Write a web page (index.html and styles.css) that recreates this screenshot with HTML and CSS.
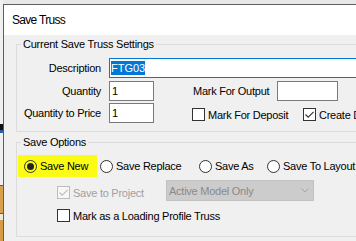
FILE: index.html
```html
<!DOCTYPE html>
<html>
<head>
<meta charset="utf-8">
<link rel="stylesheet" href="styles.css">
</head>
<body>
<div class="strip">
  <div class="seg s-top"></div>
  <div class="seg s-arrow"></div>
  <div class="seg s-arrow2"></div>
  <div class="seg s-light"></div>
  <div class="seg s-line"></div>
  <div class="seg s-orange"></div>
  <div class="seg s-line"></div>
  <div class="seg s-light2"></div>
  <div class="seg s-orange2"></div>
</div>
<div class="window">
  <div class="titlebar">Save Truss</div>
  <div class="content">
    <div class="group g1">
      <div class="legend">Current Save Truss Settings</div>
      <div class="row r-desc">
        <span class="lbl">Description</span>
        <div class="input focused"><span class="sel">FTG03</span></div>
      </div>
      <div class="row r-qty">
        <span class="lbl">Quantity</span>
        <div class="input small">1</div>
        <span class="lbl2">Mark For Output</span>
        <div class="input output"></div>
      </div>
      <div class="row r-qtp">
        <span class="lbl">Quantity to Price</span>
        <div class="input small">1</div>
        <label class="check c-deposit"><span class="cb"></span><span>Mark For Deposit</span></label>
        <label class="check"><span class="cb on"><svg viewBox="0 0 11 11" width="11" height="11"><path d="M1.5 5.5 L4.2 8.2 L9.6 2.8" fill="none" stroke="#333" stroke-width="1.1"/></svg></span><span>Create Deposit</span></label>
      </div>
    </div>
    <div class="group g2">
      <div class="legend">Save Options</div>
      <div class="row r-radios">
        <label class="radio hl w1"><span class="rb on"><span class="dot"></span></span><span>Save New</span></label>
        <label class="radio w2"><span class="rb"></span><span>Save Replace</span></label>
        <label class="radio w3"><span class="rb"></span><span>Save As</span></label>
        <label class="radio"><span class="rb"></span><span>Save To Layout</span></label>
      </div>
      <div class="row r-proj">
        <label class="check disabled w-proj"><span class="cb"><svg viewBox="0 0 11 11" width="11" height="11"><path d="M1.5 5.5 L4.2 8.2 L9.6 2.8" fill="none" stroke="#bcbcbc" stroke-width="1.1"/></svg></span><span>Save to Project</span></label>
        <div class="select"><span>Active Model Only</span><svg class="chev" viewBox="0 0 8 5" width="8" height="5"><path d="M0.5 0.5 L4 4 L7.5 0.5" fill="none" stroke="#a6a6a6" stroke-width="1"/></svg></div>
      </div>
      <div class="row r-load">
        <label class="check"><span class="cb"></span><span>Mark as a Loading Profile Truss</span></label>
      </div>
    </div>
  </div>
</div>
</body>
</html>
```
FILE: styles.css
```css
html, body {
  margin: 0;
  padding: 0;
}
body {
  width: 356px;
  height: 241px;
  overflow: hidden;
  display: flex;
  background: #e8e8e8;
  font-family: "Liberation Sans", Arial, sans-serif;
  font-size: 11px;
  letter-spacing: -0.25px;
  color: #000;
}
.strip {
  width: 3px;
  flex: none;
  display: flex;
  flex-direction: column;
}
.seg { flex: none; }
.s-top { height: 124px; background: #f0f0f0; }
.s-arrow { height: 6px; background: #111; }
.s-arrow2 { height: 3px; background: #2a5fa8; }
.s-light { height: 52px; background: #f0f0f0; }
.s-line { height: 1px; background: #6a5a40; }
.s-orange { height: 27px; background: #d8a04c; }
.s-light2 { height: 6px; background: #ece7df; }
.s-orange2 { height: 21px; background: #d69b45; }

.window {
  flex: 1;
  margin-top: 4px;
  border-left: 1px solid #5e5e5e;
  border-top: 1px solid #5e5e5e;
  background: #f0f0f0;
  overflow: hidden;
}
.titlebar {
  height: 30px;
  line-height: 30px;
  background: #fff;
  padding-left: 8px;
  font-size: 12px;
  letter-spacing: -0.7px;
}
.content {
  width: 420px;
  padding-left: 12px;
}
.group {
  border: 1px solid #dcdcdc;
}
.g1 {
  margin-top: 9px;
  padding-bottom: 8px;
}
.g2 {
  margin-top: 10px;
  padding-bottom: 14px;
}
.legend {
  width: fit-content;
  margin-top: -7px;
  margin-left: 4px;
  padding: 0 2px;
  height: 13px;
  line-height: 13px;
  background: #f0f0f0;
  white-space: nowrap;
}
.row {
  display: flex;
  align-items: center;
}
.lbl {
  width: 84px;
  flex: none;
  display: flex;
  justify-content: flex-end;
  margin-right: 8px;
  white-space: nowrap;
}
.input {
  height: 20px;
  box-sizing: border-box;
  border: 1px solid #7a7a7a;
  background: #fff;
  line-height: 18px;
  padding-left: 2px;
  flex: none;
  letter-spacing: 0;
}
.input.focused {
  flex: 1;
  border-color: #0078d7;
  padding-left: 1px;
}
.sel {
  background: #0078d7;
  color: #fff;
  display: inline-block;
  line-height: 14px;
  vertical-align: middle;
  margin-top: -2px;
}
.input.small { width: 45px; }
.input.output { width: 61px; }
.r-desc { margin-top: 7px; }
.r-qty { margin-top: 3px; }
.r-qtp { margin-top: 2px; }
.lbl2 {
  margin-left: 39px;
  width: 84px;
  flex: none;
  white-space: nowrap;
}
.check {
  display: flex;
  align-items: center;
  gap: 3px;
  white-space: nowrap;
}
.c-deposit {
  margin-left: 38px;
  width: 111px;
  flex: none;
}
.r-qtp .check { margin-top: 3px; }
.cb {
  width: 13px;
  height: 13px;
  box-sizing: border-box;
  border: 1px solid #333;
  background: #fff;
  flex: none;
  display: flex;
  align-items: center;
  justify-content: center;
}
.disabled { color: #a0a0a0; }
.disabled .cb {
  border-color: #bcbcbc;
  background: #f7f7f7;
}

.r-radios {
  margin-top: 6px;
  margin-left: 1px;
  height: 22px;
}
.radio {
  display: flex;
  align-items: center;
  gap: 3px;
  white-space: nowrap;
  flex: none;
}
.rb {
  width: 13px;
  height: 13px;
  box-sizing: border-box;
  border: 1px solid #333;
  border-radius: 50%;
  background: #fff;
  display: flex;
  align-items: center;
  justify-content: center;
  flex: none;
}
.dot {
  width: 7px;
  height: 7px;
  border-radius: 50%;
  background: #222;
}
.hl {
  background: #fbfb14;
  height: 22px;
  padding-left: 6px;
  box-sizing: border-box;
}
.hl .rb { background: transparent; }
.w1 { width: 79px; margin-right: 3px; }
.w2 { width: 99px; }
.w3 { width: 68px; }

.r-proj {
  margin-top: 3px;
  margin-left: 40px;
}
.w-proj {
  width: 109px;
  flex: none;
  margin-top: 4px;
}
.select {
  width: 148px;
  height: 21px;
  box-sizing: border-box;
  background: #cccccc;
  border: 1px solid #c2c2c2;
  color: #8a8a8a;
  display: flex;
  align-items: center;
  padding-left: 2px;
  padding-right: 4px;
  flex: none;
}
.select span { flex: 1; }
.chev { flex: none; }
.r-load {
  margin-top: 8px;
  margin-left: 40px;
}
```
